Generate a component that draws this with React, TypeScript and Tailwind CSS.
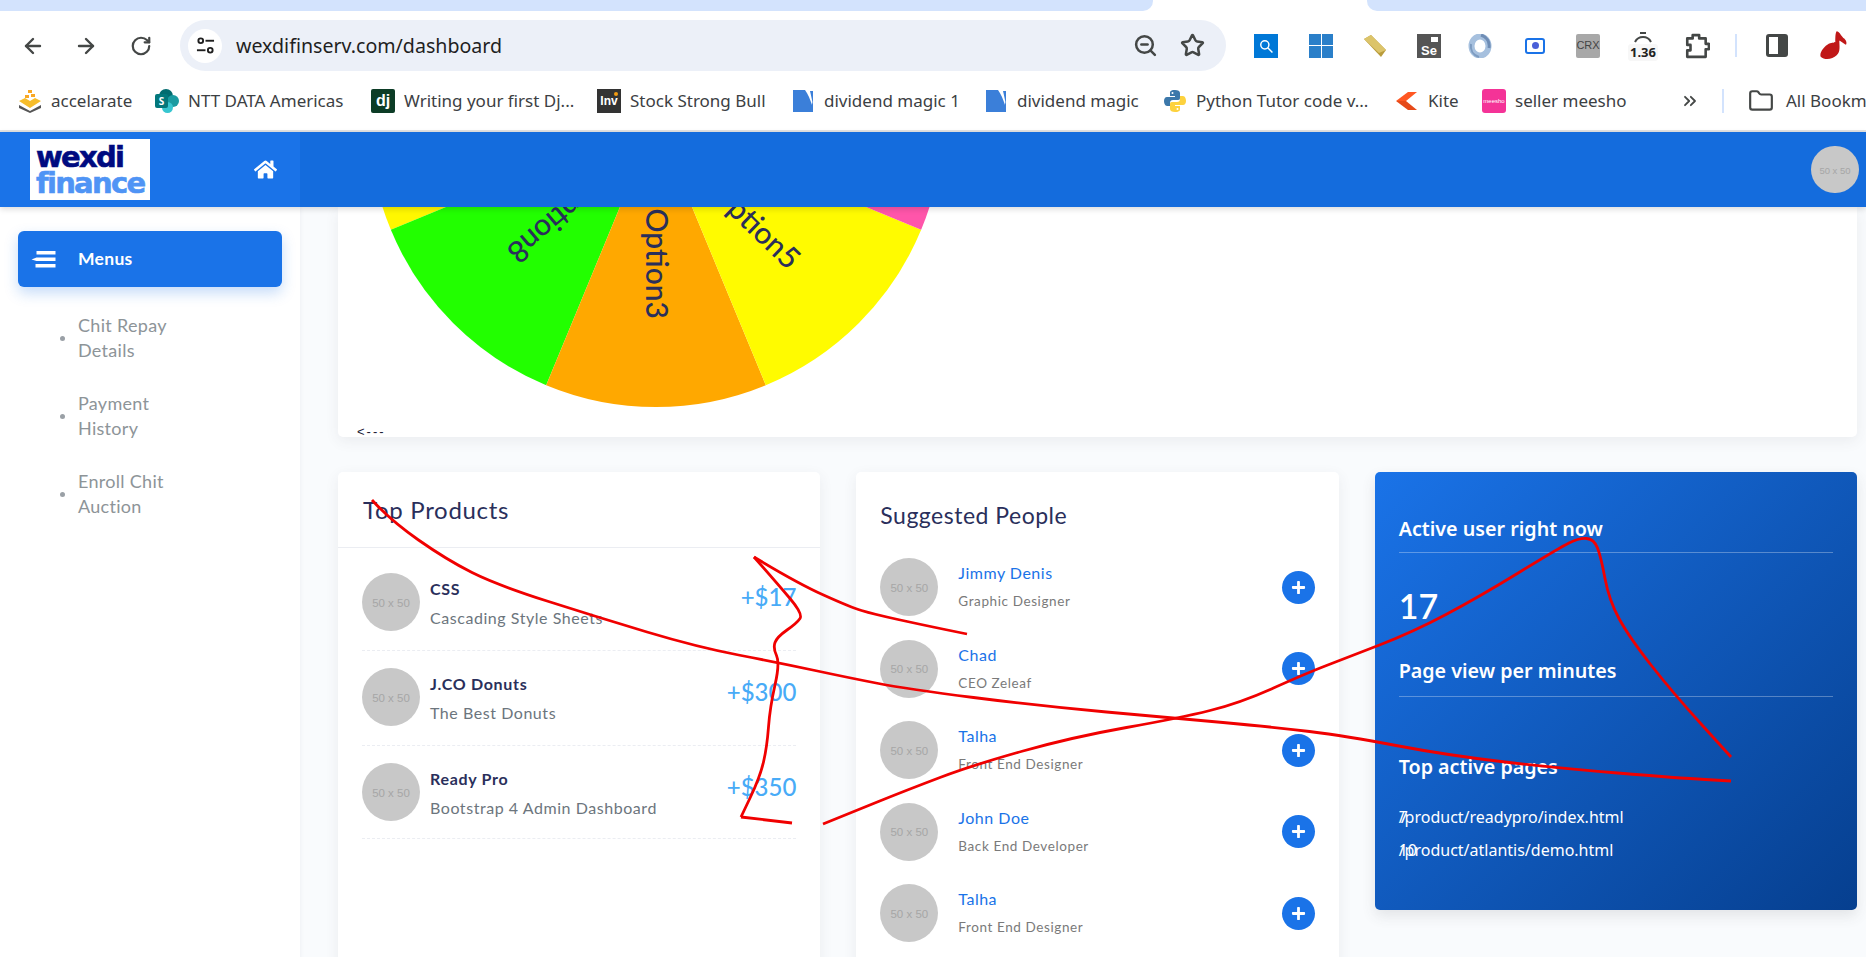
import { ArrowLeft, ArrowRight, ChevronsRight, Folder, RotateCw, Star, ZoomOut } from "lucide-react";
import { FaHome, FaPlus } from "react-icons/fa";

const bookmarks = [
  { label: "accelarate", icon: "accelarate", width: "w-[137px]" },
  { label: "NTT DATA Americas", icon: "sharepoint", width: "w-[216px]" },
  { label: "Writing your first Dj...", icon: "dj", width: "w-[226px]" },
  { label: "Stock Strong Bull", icon: "inv", width: "w-[194px]" },
  { label: "dividend magic 1", icon: "doc", width: "w-[193px]" },
  { label: "dividend magic", icon: "doc", width: "w-[179px]" },
  { label: "Python Tutor code v...", icon: "python", width: "w-[232px]" },
  { label: "Kite", icon: "kite", width: "w-[87px]" },
  { label: "seller meesho", icon: "meesho", width: "w-[198px]" },
];

const products = [
  { name: "CSS", desc: "Cascading Style Sheets", price: "+$17" },
  { name: "J.CO Donuts", desc: "The Best Donuts", price: "+$300" },
  { name: "Ready Pro", desc: "Bootstrap 4 Admin Dashboard", price: "+$350" },
];

const people = [
  { name: "Jimmy Denis", role: "Graphic Designer" },
  { name: "Chad", role: "CEO Zeleaf" },
  { name: "Talha", role: "Front End Designer" },
  { name: "John Doe", role: "Back End Developer" },
  { name: "Talha", role: "Front End Designer" },
];

const wedges = [
  { from: -112.5, to: -67.5, fill: "#fff700" },
  { from: -67.5, to: -22.5, fill: "#22ff00" },
  { from: -22.5, to: 22.5, fill: "#ffa800" },
  { from: 22.5, to: 67.5, fill: "#fffb00" },
  { from: 67.5, to: 112.5, fill: "#ff55aa" },
];

// end of each label, in card coordinates, and its rotation
const wheelLabels = [
  { label: "Option8", x: 167, y: 42, angle: 140 },
  { label: "Option3", x: 308, y: 112, angle: 90 },
  { label: "Option5", x: 450, y: 64, angle: 44 },
];

const scribbles: [number, number][][] = [
  [[372, 500], [390, 520], [447, 560], [497, 585], [597, 617], [697, 647], [780, 663], [850, 678], [907, 689], [1040, 706], [1173, 718], [1273, 727], [1346, 736], [1446, 755], [1556, 768], [1679, 778], [1731, 781]],
  [[754, 557], [797, 583], [850, 607], [873, 614], [923, 625], [967, 634]],
  [[754, 557], [777, 583], [803, 614], [797, 623], [777, 637], [773, 648], [780, 663], [770, 707], [767, 747], [760, 777], [741, 817]],
  [[741, 817], [792, 823]],
  [[823, 824], [850, 813], [907, 790], [973, 765], [1073, 737], [1180, 718], [1240, 703], [1307, 673], [1346, 658], [1413, 632], [1479, 597], [1559, 548], [1579, 538], [1594, 539], [1601, 557], [1609, 600], [1629, 637], [1673, 693], [1731, 757]],
];

const smooth = (pts: [number, number][]) => {
  let d = `M${pts[0][0]} ${pts[0][1]}`;
  for (let i = 1; i < pts.length - 1; i++) {
    const mx = (pts[i][0] + pts[i + 1][0]) / 2;
    const my = (pts[i][1] + pts[i + 1][1]) / 2;
    d += ` Q${pts[i][0]} ${pts[i][1]} ${mx} ${my}`;
  }
  const last = pts[pts.length - 1];
  return d + ` L${last[0]} ${last[1]}`;
};

const wheelX = 318;
const wheelY = -87;

const wedgePath = (from: number, to: number) => {
  const r = 287;
  const point = (a: number) => {
    const rad = (a * Math.PI) / 180;
    return `${wheelX + r * Math.sin(rad)} ${wheelY + r * Math.cos(rad)}`;
  };
  return `M${wheelX} ${wheelY} L${point(to)} A${r} ${r} 0 0 1 ${point(from)} Z`;
};

const Favicon = ({ icon }: { icon: string }) => {
  if (icon === "accelarate") {
    return (
      <svg viewBox="0 0 24 24" className="h-6 w-6 shrink-0">
        <path d="M1 16l11 6 11-6v3l-11 5-11-5z" fill="#555" />
        <path d="M1 12l6-3 5 3 5-3 6 3-11 7z" fill="#f7bd2b" />
        <path d="M7 6h4v3H7zM13 5h4v3h-4zM10 1h4v3h-4z" fill="#f9a825" />
      </svg>
    );
  }
  if (icon === "sharepoint") {
    return (
      <div className="relative h-6 w-6 shrink-0">
        <div className="absolute left-[4px] top-0 h-[14px] w-[14px] rounded-full bg-[#036c70]" />
        <div className="absolute right-0 top-[6px] h-[12px] w-[12px] rounded-full bg-[#1a9ba1]" />
        <div className="absolute left-[7px] bottom-0 h-[11px] w-[11px] rounded-full bg-[#37c6d0]" />
        <div className="absolute left-0 top-[5px] flex h-[14px] w-[13px] items-center justify-center rounded-[2px] bg-[#03787c] font-['Open_Sans',sans-serif] text-[10px] font-bold leading-none text-white">
          S
        </div>
      </div>
    );
  }
  if (icon === "dj") {
    return (
      <div className="flex h-6 w-6 shrink-0 items-center justify-center rounded-[2px] bg-[#0c3c26] font-['Liberation_Sans',sans-serif] text-[16px] font-bold leading-none text-white">
        dj
      </div>
    );
  }
  if (icon === "inv") {
    return (
      <div className="relative flex h-6 w-6 shrink-0 items-center justify-center bg-[#333] font-['Liberation_Sans',sans-serif] text-[12px] font-bold leading-none text-white">
        Inv
        <div className="absolute right-[3px] top-[3px] h-[4px] w-[4px] rounded-full bg-[#f39c12]" />
      </div>
    );
  }
  if (icon === "doc") {
    return (
      <svg viewBox="0 0 24 24" className="h-6 w-6 shrink-0">
        <path d="M2 1h14c3 6 4 10 6 14v8H2z" fill="#3b7fd9" />
        <path d="M14 1h7v15c-2-6-4-11-7-15z" fill="#fff" />
        <path d="M19 2h3v14c-1-5-2-10-3-14z" fill="#3b7fd9" />
      </svg>
    );
  }
  if (icon === "python") {
    return (
      <svg viewBox="0 0 24 24" className="h-6 w-6 shrink-0">
        <path d="M12 1c-5 0-5 2-5 3v3h5v1H4c-2 0-3 2-3 4s1 5 3 5h3v-3c0-2 1-3 3-3h5c2 0 2-1 2-3V4c0-2-2-3-5-3z" fill="#3c78aa" />
        <path d="M12 23c5 0 5-2 5-3v-3h-5v-1h8c2 0 3-2 3-4s-1-5-3-5h-3v3c0 2-1 3-3 3H9c-2 0-2 1-2 3v4c0 2 2 3 5 3z" fill="#fdd23e" />
        <circle cx="9.5" cy="4" r="1" fill="#fff" />
        <circle cx="14.5" cy="20" r="1" fill="#fff" />
      </svg>
    );
  }
  if (icon === "kite") {
    return (
      <svg viewBox="0 0 24 24" className="h-6 w-6 shrink-0">
        <path d="M1 12L13 3h9l-11 9z" fill="#ff5722" />
        <path d="M1 12l10 0 11 9h-9z" fill="#e64a19" />
      </svg>
    );
  }
  return (
    <div className="flex h-6 w-6 shrink-0 items-center justify-center rounded-[3px] bg-[#f43397] font-['Liberation_Sans',sans-serif] text-[6px] leading-none text-white">
      meesho
    </div>
  );
};

const Placeholder = ({ small }: { small?: boolean }) => (
  <div
    className={
      small
        ? "flex h-[47px] w-[48px] shrink-0 items-center justify-center rounded-full bg-[#c8c8c8] pt-[3px] font-['Liberation_Sans',sans-serif] text-[9.5px] text-[#a6a6a6]"
        : "flex h-[58px] w-[58px] shrink-0 items-center justify-center rounded-full bg-[#c8c8c8] pt-[3px] font-['Liberation_Sans',sans-serif] text-[11.5px] text-[#a6a6a6]"
    }
  >
    50 x 50
  </div>
);

const BrowserChrome = () => (
  <div className="bg-white font-['Noto_Sans',sans-serif]">
    <div className="flex h-[11px]">
      <div className="w-[1153px] rounded-br-[10px] bg-[#d3e3fd]" />
      <div className="w-[214px]" />
      <div className="flex-1 rounded-bl-[10px] bg-[#d3e3fd]" />
    </div>
    <div className="flex h-[69px] items-start pl-[21px] pt-[9px]">
      <div className="flex h-[51px] items-center">
        <ArrowLeft size={24} strokeWidth={2.4} className="text-[#444746]" />
        <ArrowRight size={24} strokeWidth={2.4} className="ml-[29px] text-[#444746]" />
        <RotateCw size={22} strokeWidth={2.4} className="ml-[32px] text-[#444746]" />
      </div>
      <div className="ml-[28px] flex h-[51px] w-[1046px] items-center rounded-full bg-[#ecf0f8] pl-[8px] pr-[21px]">
        <div className="flex h-[34px] w-[34px] items-center justify-center rounded-full bg-white">
          <svg viewBox="0 0 20 20" className="h-[19px] w-[19px]" fill="none" stroke="#1f1f1f" strokeWidth="2">
            <circle cx="5" cy="5" r="2.5" />
            <path d="M10 5h9" />
            <path d="M1 15h9" />
            <circle cx="15" cy="15" r="2.5" />
          </svg>
        </div>
        <span className="ml-[14px] flex-1 text-[19.6px] text-[#1f1f1f]">wexdifinserv.com/dashboard</span>
        <ZoomOut size={25} strokeWidth={2.4} className="text-[#444746]" />
        <Star size={25} strokeWidth={2.4} className="ml-[22px] text-[#444746]" />
      </div>
      <div className="flex h-[51px] items-center">
        <div className="ml-[28px] flex h-6 w-6 items-center justify-center bg-[#0078d7]">
          <svg viewBox="0 0 24 24" className="h-[14px] w-[14px]" fill="none" stroke="#fff" strokeWidth="2.5">
            <circle cx="10" cy="10" r="7" />
            <path d="M15 15l8 8" />
          </svg>
        </div>
        <div className="ml-[31px] grid h-6 w-6 grid-cols-2 gap-[1px]">
          <div className="bg-[#2a7fc9]" />
          <div className="bg-[#2a7fc9]" />
          <div className="bg-[#2a7fc9]" />
          <div className="bg-[#2a7fc9]" />
        </div>
        <svg viewBox="0 0 24 24" className="ml-[30px] h-6 w-6">
          <path d="M1 5l7-4 15 15-5 7z" fill="#b99c3c" />
          <path d="M1 5l7-4 15 15-7 3z" fill="#dcc46a" />
        </svg>
        <div className="relative ml-[30px] flex h-6 w-6 items-end justify-center bg-[#555] pb-[1px] font-['Liberation_Sans',sans-serif] text-[13px] font-bold leading-none text-white">
          Se
          <div className="absolute right-[3px] top-[3px] h-[5px] w-[7px] bg-white" />
        </div>
        <svg viewBox="0 0 24 24" className="ml-[27px] h-6 w-6" fill="none">
          <ellipse cx="12" cy="12" rx="8.5" ry="9.5" stroke="#a6c0de" strokeWidth="6" />
          <path d="M13 1c6 2 9 7 8 13" stroke="#6f8db5" strokeWidth="3" />
          <path d="M11 23c-6-2-9-7-8-13" stroke="#7d9bc0" strokeWidth="2" />
        </svg>
        <div className="ml-[33px] flex h-[16px] w-[20px] items-center justify-center rounded-[3px] border-2 border-[#1a73e8]">
          <div className="h-[7px] w-[7px] rounded-full bg-[#4a5fd8]" />
        </div>
        <div className="ml-[31px] flex h-6 w-6 items-center justify-center rounded-[2px] bg-[#a8a8a8] font-['Liberation_Sans',sans-serif] text-[11px] text-[#444]">
          CRX
        </div>
        <div className="ml-[31px] flex h-[36px] w-6 flex-col items-center pt-[3px]">
          <svg viewBox="0 0 24 12" className="h-[12px] w-6" fill="none" stroke="#444746" strokeWidth="2">
            <path d="M4 11c2-4 5-5 8-5s6 1 8 5" />
            <path d="M9 2h6" />
          </svg>
          <div className="mt-[1px] rounded-[3px] bg-[#f7f7f7] px-[2px] text-[13px] font-bold leading-[17px] text-[#222]">1.36</div>
        </div>
        <svg viewBox="0 0 24 24" className="ml-[29px] h-[26px] w-[26px]" fill="none" stroke="#444746" strokeWidth="2.4" strokeLinejoin="round">
          <path d="M3 5h5V2h6v3h6v5h3v5h-3v7H3v-6h3v-5H3z" />
        </svg>
        <div className="ml-[25px] h-[23px] w-[2px] bg-[#d3e3fd]" />
        <div className="ml-[29px] flex h-[23px] w-[22px] rounded-[3px] border-[3px] border-[#444746]">
          <div className="flex-1" />
          <div className="w-[7px] bg-[#444746]" />
        </div>
        <svg viewBox="0 0 24 24" className="ml-[30px] h-[32px] w-[32px]">
          <path d="M14 1c2 0 3 3 5 5 2 1 3 4 2 5-2-1-4-3-5-3 0 4 1 8-2 11-3 3-9 4-12 1-1-3 2-7 5-9 3-2 5-1 6-2 0-3 0-7 1-8z" fill="#c01818" />
        </svg>
      </div>
    </div>
    <div className="flex h-[52px] items-center overflow-hidden whitespace-nowrap border-b-[2px] border-[#e3e3e3] pb-[8px] pl-[18px] text-[17px] text-[#3c4043]">
      {bookmarks.map((b) => (
        <div key={b.label} className={`flex shrink-0 items-center gap-[9px] ${b.width}`}>
          <Favicon icon={b.icon} />
          <span>{b.label}</span>
        </div>
      ))}
      <ChevronsRight size={20} strokeWidth={2.2} className="shrink-0 text-[#444746]" />
      <div className="ml-[22px] h-[24px] w-[2px] shrink-0 bg-[#d3e3fd]" />
      <Folder size={26} strokeWidth={2} className="ml-[24px] shrink-0 text-[#444746]" />
      <span className="ml-[12px] shrink-0">All Bookmarks</span>
    </div>
  </div>
);

const Header = () => (
  <div className="relative z-10 flex h-[75px] shrink-0 bg-[#146cdd] shadow-[0_2px_6px_rgba(0,0,0,0.15)]">
    <div className="flex w-[300px] items-center bg-[#1a73e8] pl-[30px]">
      <div className="flex h-[61px] w-[120px] flex-col items-start justify-center overflow-hidden bg-white pl-[6px] font-['DejaVu_Sans',sans-serif] font-bold leading-[26px] tracking-[-1.7px]">
        <span className="text-[29px] text-[#000b80] [-webkit-text-stroke:0.6px_#000b80]">wexdi</span>
        <span className="text-[29px] text-[#4f94f5] [-webkit-text-stroke:0.6px_#4f94f5]">finance</span>
      </div>
      <FaHome size={23} className="ml-[104px] text-white" />
    </div>
    <div className="flex flex-1 items-center justify-end pr-[7px]">
      <Placeholder small />
    </div>
  </div>
);

const Sidebar = () => (
  <div className="w-[300px] shrink-0 bg-white px-[18px] pt-[24px] shadow-[0_0_5px_rgba(18,38,63,0.06)]">
    <div className="flex h-[56px] w-[264px] items-center rounded-[6px] bg-[#1a73e8] pl-[13px] text-[17.5px] font-bold tracking-[0.3px] text-white shadow-[0_6px_14px_rgba(26,115,232,0.25)]">
      <svg viewBox="0 0 24 17" className="h-[17px] w-[25px]" fill="#fff">
        <path d="M5 0h19v3.5H5z" />
        <path d="M0 8.5L5 6.5h19v3.5H5z" />
        <path d="M4 13h20v3.5H4z" />
      </svg>
      <span className="ml-[22px]">Menus</span>
    </div>
    <div className="mt-[26px] flex flex-col gap-[28px] text-[18px] leading-[25px] tracking-[0.3px] text-[#8d9498]">
      {[
        ["Chit Repay", "Details"],
        ["Payment", "History"],
        ["Enroll Chit", "Auction"],
      ].map((item) => (
        <div key={item[0]} className="flex items-center pl-[42px]">
          <div className="h-[5px] w-[5px] rounded-full bg-[#9aa0a6]" />
          <div className="ml-[13px]">
            <div>{item[0]}</div>
            <div>{item[1]}</div>
          </div>
        </div>
      ))}
    </div>
  </div>
);

const WheelCard = () => (
  <div className="relative h-[230px] overflow-hidden rounded-b-[5px] bg-white shadow-[0_4px_14px_rgba(69,65,78,0.08)]">
    <svg viewBox="0 0 1519 230" className="block h-[230px] w-[1519px]">
      {wedges.map((w) => (
        <path key={w.from} d={wedgePath(w.from, w.to)} fill={w.fill} />
      ))}
      {wheelLabels.map((l) => (
        <text
          key={l.label}
          transform={`translate(${l.x} ${l.y}) rotate(${l.angle})`}
          textAnchor="end"
          fontFamily="Lato, sans-serif"
          fontSize="30"
          fontWeight="500"
          fill="#2a2f5b"
        >
          {l.label}
        </text>
      ))}
    </svg>
    <span className="absolute left-[19px] top-[218px] font-['Liberation_Sans',sans-serif] text-[13px] leading-[14px] tracking-[2px] text-[#1a2035]">
      {"<---"}
    </span>
  </div>
);

const TopProducts = () => (
  <div className="h-[520px] rounded-[5px] bg-white shadow-[0_4px_14px_rgba(69,65,78,0.08)]">
    <div className="flex h-[76px] items-center border-b border-[#ebedf2] pl-[25px] text-[24px] tracking-[0.7px] text-[#2a2f5b]">
      Top Products
    </div>
    <div className="px-[24px] pt-[25px]">
      {products.map((p) => (
        <div key={p.name} className="mb-[17px] flex h-[78px] items-start border-b border-dashed border-[#ebedf2] last:h-[76px]">
          <Placeholder />
          <div className="ml-[10px] flex-1 pt-[6px]">
            <div className="text-[16px] font-bold leading-[20px] tracking-[0.7px] text-[#2a2f5b]">{p.name}</div>
            <div className="mt-[9px] text-[16px] leading-[20px] tracking-[0.55px] text-[#6c757d]">{p.desc}</div>
          </div>
          <div className="pt-[8px] text-[24px] font-medium leading-[32px] text-[#48abf7]">{p.price}</div>
        </div>
      ))}
    </div>
  </div>
);

const SuggestedPeople = () => (
  <div className="h-[520px] rounded-[5px] bg-white px-[24px] shadow-[0_4px_14px_rgba(69,65,78,0.08)]">
    <div className="pt-[25px] text-[23px] leading-[36px] tracking-[0.5px] text-[#2a2f5b]">Suggested People</div>
    <div className="mt-[25px] flex flex-col gap-[23.5px]">
      {people.map((p, i) => (
        <div key={i} className="flex items-center">
          <Placeholder />
          <div className="ml-[20px] flex-1">
            <div className="text-[16px] leading-[20px] tracking-[0.5px] text-[#1a73e8]">{p.name}</div>
            <div className="mt-[8px] text-[13.5px] leading-[20px] tracking-[0.6px] text-[#7a7a7a]">{p.role}</div>
          </div>
          <div className="flex h-[33px] w-[33px] items-center justify-center rounded-full bg-[#1a73e8]">
            <FaPlus size={15} className="text-white" />
          </div>
        </div>
      ))}
    </div>
  </div>
);

const ActiveCard = () => (
  <div className="h-[438px] rounded-[5px] bg-[linear-gradient(135deg,#1a73e8_0%,#063f8f_100%)] px-[24px] pt-[44px] font-['Noto_Sans',sans-serif] text-white shadow-[0_6px_14px_rgba(69,65,78,0.12)]">
    <div className="border-b border-white/30 pb-[10px] text-[19.7px] font-semibold leading-[26px]">Active user right now</div>
    <div className="mt-[30px] font-['Lato',sans-serif] text-[34px] font-semibold leading-[46px]">17</div>
    <div className="mt-[29px] border-b border-white/30 pb-[12px] text-[19.7px] font-semibold leading-[26px]">Page view per minutes</div>
    <div className="mt-[57px] text-[19.7px] font-semibold leading-[26px]">Top active pages</div>
    <div className="mt-[27px] grid text-[16px] leading-[20px]">
      <span className="col-start-1 row-start-1">7</span>
      <span className="col-start-1 row-start-1">/product/readypro/index.html</span>
    </div>
    <div className="mt-[13px] grid text-[16px] leading-[20px]">
      <span className="col-start-1 row-start-1">10</span>
      <span className="col-start-1 row-start-1">/product/atlantis/demo.html</span>
    </div>
  </div>
);

const App = () => {
  return (
    <div className="relative flex h-[957px] w-[1866px] flex-col overflow-hidden bg-[#f9fbfd] font-['Lato',sans-serif]">
      <BrowserChrome />
      <Header />
      <div className="flex flex-1">
        <Sidebar />
        <div className="w-[1566px] pl-[38px] pr-[9px]">
          <WheelCard />
          <div className="mt-[35px] grid grid-cols-3 items-start gap-[36px]">
            <TopProducts />
            <SuggestedPeople />
            <ActiveCard />
          </div>
        </div>
      </div>
      {/* red pen marks drawn on the screenshot */}
      <svg viewBox="0 0 1866 957" className="pointer-events-none absolute inset-0 z-20 h-[957px] w-[1866px]" fill="none" stroke="#f00000" strokeWidth="2.8">
        {scribbles.map((s, i) => (
          <path key={i} d={smooth(s)} />
        ))}
      </svg>
    </div>
  );
};

export default App;
